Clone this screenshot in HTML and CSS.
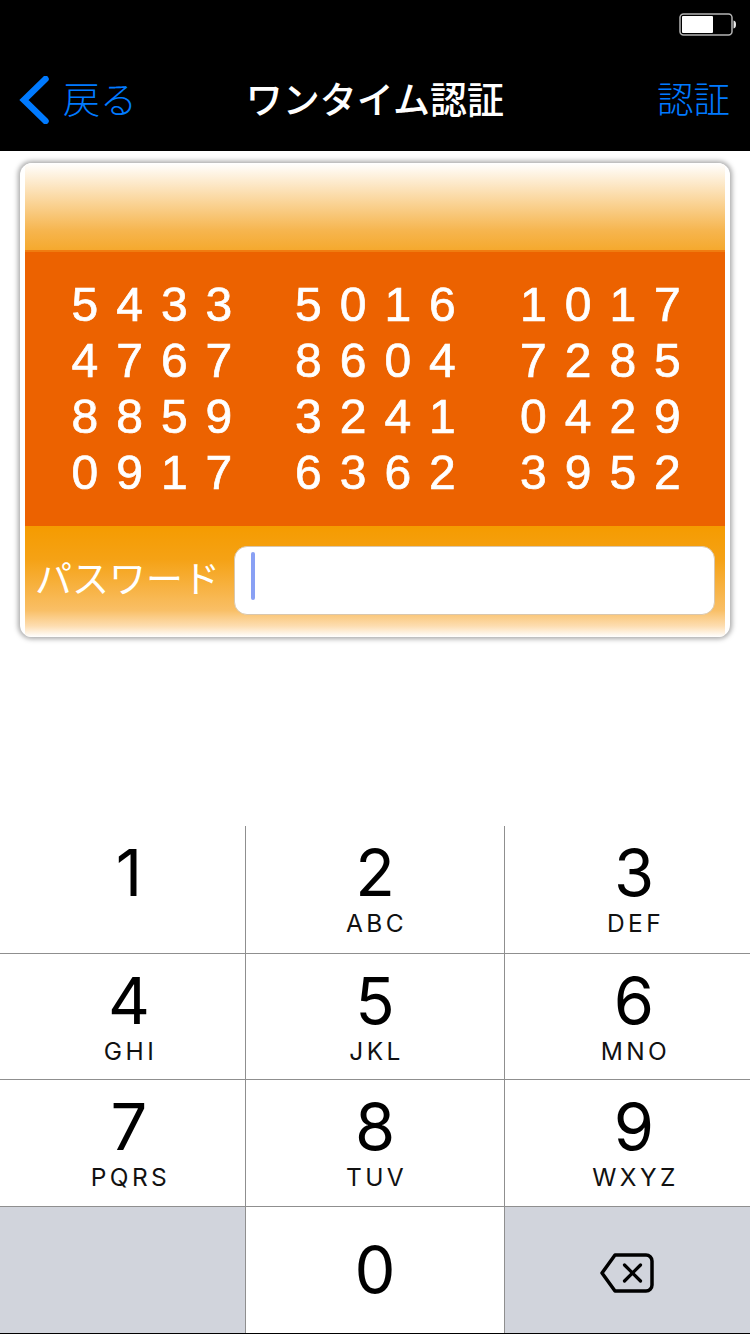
FILE: index.html
```html
<!DOCTYPE html>
<html lang="ja">
<head>
<meta charset="utf-8">
<title>ワンタイム認証</title>
<link rel="stylesheet" href="styles.css">
</head>
<body>
<div class="page">
  <header class="header">
    <div class="status">
      <svg class="battery" width="58" height="24" viewBox="0 0 58 24">
        <rect x="1" y="1" width="52" height="21" rx="3.500" fill="none" stroke="#b4b4b4" stroke-width="1.500"/>
        <rect x="3" y="3" width="31" height="17" rx="1" fill="#fff"/>
        <path d="M54.500 7.500c1.900.3 2.500 1.800 2.500 4s-.6 3.700-2.500 4z" fill="#e8e8e8"/>
      </svg>
    </div>
    <nav class="nav">
      <div class="back">
        <svg class="chevron" width="30" height="48" viewBox="0 0 30 48">
          <path d="M26.500 3 L5 24 L26.500 45" fill="none" stroke="#007aff" stroke-width="6.500" stroke-linecap="round" stroke-linejoin="miter"/>
        </svg>
        <span class="back-label">戻る</span>
      </div>
      <div class="title">ワンタイム認証</div>
      <div class="action">認証</div>
    </nav>
  </header>

  <section class="card">
    <div class="card-top"></div>
    <div class="matrix">
      <span>5433</span><span>5016</span><span>1017</span>
      <span>4767</span><span>8604</span><span>7285</span>
      <span>8859</span><span>3241</span><span>0429</span>
      <span>0917</span><span>6362</span><span>3952</span>
    </div>
    <div class="card-bottom">
      <label class="pw-label">パスワード</label>
      <div class="pw-input"><i class="caret"></i></div>
    </div>
  </section>

  <section class="keypad">
    <div class="key first"><b>1</b></div>
    <div class="key mid"><b>2</b><small>ABC</small></div>
    <div class="key third"><b>3</b><small>DEF</small></div>
    <div class="key first"><b>4</b><small>GHI</small></div>
    <div class="key mid"><b>5</b><small>JKL</small></div>
    <div class="key third"><b>6</b><small>MNO</small></div>
    <div class="key first"><b>7</b><small>PQRS</small></div>
    <div class="key mid"><b>8</b><small>TUV</small></div>
    <div class="key third"><b>9</b><small>WXYZ</small></div>
    <div class="key muted"></div>
    <div class="key mid zero"><b>0</b></div>
    <div class="key muted del">
      <svg width="56" height="42" viewBox="0 0 56 42">
        <path d="M16 3 H47 a6 6 0 0 1 6 6 V33 a6 6 0 0 1 -6 6 H16 L3 21 Z" fill="none" stroke="#000" stroke-width="3.500" stroke-linejoin="round"/>
        <path d="M25.500 13 L41.500 29 M41.500 13 L25.500 29" fill="none" stroke="#000" stroke-width="3.200" stroke-linecap="round"/>
      </svg>
    </div>
  </section>
</div>
</body>
</html>
```

FILE: styles.css
```css
* { box-sizing: border-box; }
html, body { margin: 0; padding: 0; background: #fff; }
body { font-family: "Noto Sans CJK JP", "Noto Sans", sans-serif; }
.page {
  width: 750px;
  height: 1334px;
  display: flex;
  flex-direction: column;
  overflow: hidden;
}

/* header */
.header { height: 151px; background: #000; flex: none; }
.status { height: 52px; display: flex; justify-content: flex-end; align-items: flex-start; padding: 13px 13px 0 0; }
.battery { display: block; }
.nav {
  height: 99px;
  display: grid;
  grid-template-columns: 1fr auto 1fr;
  align-items: center;
  padding: 0 20px 4px;
}
.back { display: flex; align-items: center; gap: 14px; }
.chevron { display: block; margin-left: -1px; }
.back-label { font-size: 37px; line-height: 48px; color: #007aff; font-weight: 300; margin-bottom: 4px; }
.title { font-size: 37px; line-height: 48px; color: #fff; font-weight: 500; margin: 0 0 4px 0; }
.action { font-size: 36.500px; line-height: 48px; color: #007aff; font-weight: 300; text-align: right; margin-bottom: 4px; }

/* card */
.card {
  flex: none;
  width: 710px;
  height: 474px;
  margin: 12px 0 0 20px;
  border-radius: 12px;
  background: #fff;
  box-shadow: 0 0 5px 2px #a8a8a8;
  display: flex;
  flex-direction: column;
  overflow: hidden;
}
.card-top {
  height: 87px;
  flex: none;
  margin: 0 5px;
  background: linear-gradient(#fff 0%, #fbd9a3 40%, #f6b54e 78%, #f5a92e 100%);
}
.matrix {
  height: 276px;
  flex: none;
  margin: 0 5px;
  background: #ec6200;
  border-top: 2px solid #f07c10;
  display: grid;
  grid-template-columns: 223.500px 225px 1fr;
  grid-auto-rows: 56px;
  align-content: start;
  padding: 25px 0 0 46.500px;
  color: #fff;
  font-family: "Liberation Sans", Arial, sans-serif;
  font-size: 48px;
  line-height: 56px;
  letter-spacing: 18px;
  -webkit-text-stroke: 0.7px #fff;
  filter: blur(0.5px);
}
.card-bottom {
  flex: 1;
  margin: 0 5px;
  display: flex;
  align-items: flex-start;
  padding: 20px 10px 0 10px;
  gap: 14px;
  background: linear-gradient(#f59b00 0%, #f5a215 30%, #f9bf66 76%, #fdddb0 90%, #fff 100%);
}
.pw-label { font-size: 37px; line-height: 62px; color: #fff; white-space: nowrap; font-weight: 400; }
.pw-input {
  flex: 1;
  height: 69px;
  background: #fff;
  border: 1px solid #d9c7ae;
  border-radius: 13px;
  padding: 5px 0 0 16px;
}
.caret { display: block; width: 4px; height: 48px; border-radius: 2px; background: #89a0f4; }

/* keypad */
.keypad {
  margin-top: auto;
  flex: none;
  display: grid;
  grid-template-columns: 245px 258px 245px;
  grid-template-rows: 127px 125px 126px 126px;
  gap: 1px;
  background: #8f8f8f;
  border-bottom: 1px solid #000;
}
.key {
  background: #fff;
  display: flex;
  flex-direction: column;
  align-items: center;
  padding-top: 10px;
  color: #000;
  font-family: Inter, "Liberation Sans", sans-serif;
}
.key.first, .key.third { padding-left: 16px; }
.key.mid { padding-left: 3px; }
.key.zero { padding-top: 26px; }
.key b { font-size: 65px; line-height: 74px; font-weight: 400; margin-right: 3px; }
.key small { font-size: 24.500px; line-height: 26px; letter-spacing: 3.400px; margin-top: 0; color: #111; }
.key.muted { background: #d1d4dc; }
.key.del { align-items: center; justify-content: center; padding: 0; }
.del svg { display: block; margin: 6px 0 0 -2px; }
```
